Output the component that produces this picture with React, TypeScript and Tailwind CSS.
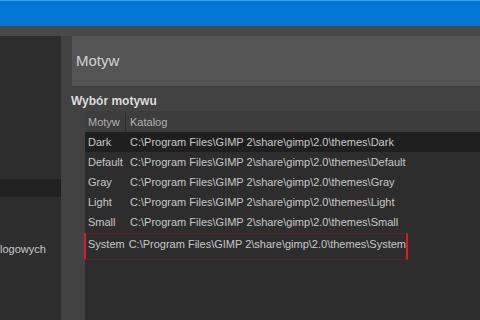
import React from "react";

const rows = ["Dark", "Default", "Gray", "Light", "Small"];
const base = "C:\\Program Files\\GIMP 2\\share\\gimp\\2.0\\themes\\";

export default function App() {
  return (
    <div
      className="w-[480px] h-[320px] flex flex-col overflow-hidden bg-[#424242] text-[#c8c8c8]"
      style={{ fontFamily: '"Liberation Sans", Arial, sans-serif' }}
    >
      <div className="h-[26px] shrink-0 bg-[#0477d6] border-t border-[#3d9be6]" />
      <div className="h-[10px] shrink-0 bg-[#4a4949]" />
      <div className="flex flex-1 min-h-0">
        <aside className="w-[61px] shrink-0 bg-[#2e2e2e] flex flex-col overflow-hidden">
          <div className="h-[143px] shrink-0" />
          <div className="h-[18px] shrink-0 bg-[#222222]" />
          <div className="h-[44px] shrink-0" />
          <div className="h-[16px] flex items-center text-[11px] whitespace-nowrap text-[#c8c8c8]">
            logowych
          </div>
        </aside>
        <main className="flex-1 flex flex-col min-w-0">
          <div className="ml-[11px] h-[50px] shrink-0 bg-[#545454] flex items-center pl-[4px] text-[15px] text-[#d2d2d2]">
            Motyw
          </div>
          <div className="h-[25px] shrink-0 pl-[10px] flex items-end pb-[1px] text-[12px] font-bold text-[#dcdcdc]">
            Wybór motywu
          </div>
          <div className="flex flex-1 pl-[24px] min-h-0">
            <div className="flex-1 bg-[#2d2d2d] flex flex-col text-[11px]">
              <div className="h-[21px] shrink-0 bg-[#3d3d3d] flex items-center text-[#b0b0b0] pt-[2px]">
                <div className="w-[41px] pl-[3px] h-full flex items-center border-r border-[#2c2c2c]">Motyw</div>
                <div className="pl-[4px]">Katalog</div>
              </div>
              {rows.map((r, i) => (
                <div
                  key={r}
                  className={`h-[20px] shrink-0 flex items-center whitespace-nowrap pt-[1px] ${i === 0 ? "bg-[#1f1f1f]" : ""}`}
                >
                  <div className="w-[45px] pl-[3px]">{r}</div>
                  <div>{base + r}</div>
                </div>
              ))}
              <div className="w-[324px] -ml-[1px] mt-[1px] h-[27px] shrink-0 flex items-start pt-[2px] whitespace-nowrap border border-[#5e2328] border-l-[2px] border-l-[#d81e2c] border-r-[2px] border-r-[#d81e2c]">
                <div className="w-[45px] pl-[2px]">System</div>
                <div>{base + "System"}</div>
              </div>
            </div>
          </div>
        </main>
      </div>
    </div>
  );
}
